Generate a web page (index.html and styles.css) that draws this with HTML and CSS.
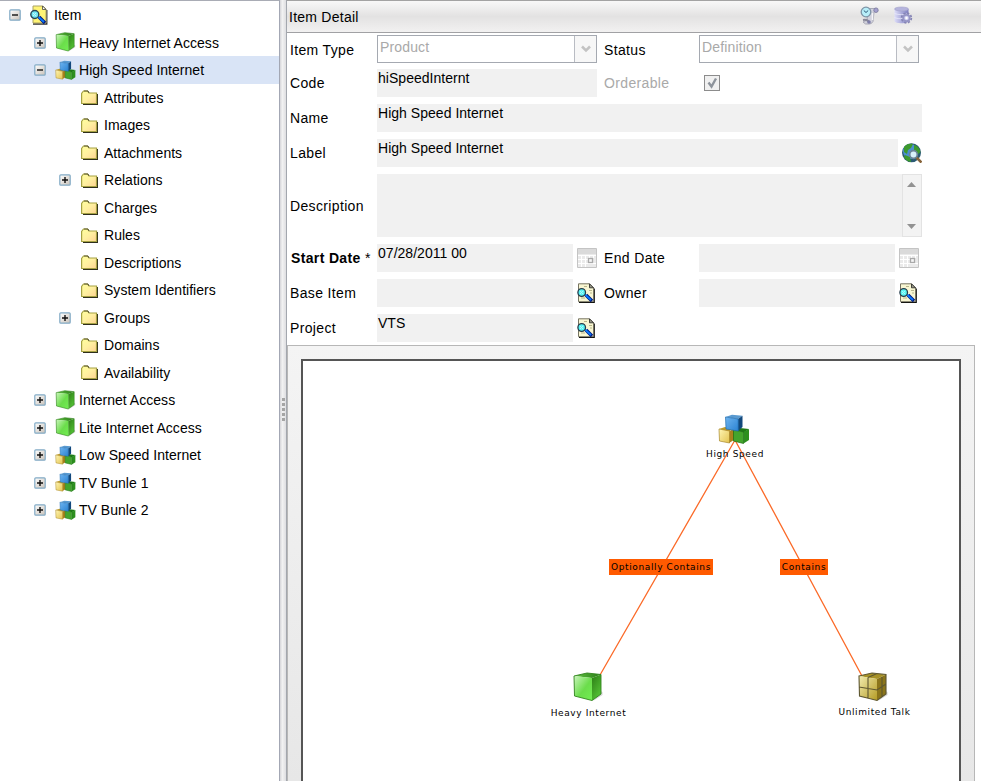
FILE: index.html
```html
<!DOCTYPE html>
<html lang="en">
<head>
<meta charset="utf-8">
<title>Item Detail</title>
<link rel="stylesheet" href="styles.css">
</head>
<body>
<svg class="defs" width="0" height="0" aria-hidden="true">
  <defs>
    <linearGradient id="gFront" x1="0" y1="0" x2="1" y2="1"><stop offset="0" stop-color="#c9f5bb"/><stop offset=".55" stop-color="#6bdd4b"/><stop offset="1" stop-color="#72ee52"/></linearGradient>
    <linearGradient id="gSide" x1="0" y1="0" x2=".6" y2="1"><stop offset="0" stop-color="#2c7d16"/><stop offset="1" stop-color="#55c335"/></linearGradient>
    <linearGradient id="gTop" x1="0" y1="0" x2="1" y2="0"><stop offset="0" stop-color="#62c244"/><stop offset="1" stop-color="#287c15"/></linearGradient>
    <linearGradient id="bFront" x1="0" y1="0" x2="1" y2="1"><stop offset="0" stop-color="#6fb4ef"/><stop offset="1" stop-color="#2b83d3"/></linearGradient>
    <linearGradient id="yFront" x1="0" y1="0" x2="1" y2="1"><stop offset="0" stop-color="#fff6b5"/><stop offset="1" stop-color="#e3c34f"/></linearGradient>
    <linearGradient id="fFill" x1="0" y1="0" x2="1" y2="1"><stop offset="0" stop-color="#ffff9c"/><stop offset=".5" stop-color="#fff0a0"/><stop offset="1" stop-color="#ffd492"/></linearGradient>
    <linearGradient id="oFront" x1="0" y1="0" x2="1" y2="1"><stop offset="0" stop-color="#f2ecb0"/><stop offset="1" stop-color="#b59c24"/></linearGradient>
    <linearGradient id="exFill" x1="0" y1="0" x2="1" y2="1"><stop offset="0" stop-color="#ffffff"/><stop offset="1" stop-color="#c9c1b8"/></linearGradient>
    <linearGradient id="dbFill" x1="0" y1="0" x2="1" y2="0"><stop offset="0" stop-color="#dcdcf8"/><stop offset="1" stop-color="#7e7ec0"/></linearGradient>
    <symbol id="plus" viewBox="0 0 12 12"><rect x=".8" y=".8" width="10.4" height="10.4" rx="1" fill="url(#exFill)" stroke="#82abc6" stroke-width="1.2"/><path d="M3 6h6M6 3v6" stroke="#111" stroke-width="1.4"/></symbol>
    <symbol id="minus" viewBox="0 0 12 12"><rect x=".8" y=".8" width="10.4" height="10.4" rx="1" fill="url(#exFill)" stroke="#82abc6" stroke-width="1.2"/><path d="M3 6h6" stroke="#111" stroke-width="1.4"/></symbol>
    <symbol id="cube" viewBox="0 0 30 30">
      <path d="M20 29 29.5 23v-3l-2-1z" fill="#999" opacity=".4"/>
      <path d="M1 4 14 1l14 1.5L19 6z" fill="url(#gTop)"/><path d="M19 6 28 2.5V22l-9 6.5z" fill="url(#gSide)"/><path d="M1 4 19 6v22.5L1.5 24z" fill="url(#gFront)"/>
      <path d="M1 4 14 1l14 1.5V22l-9 6.5L1.5 24z" fill="none" stroke="#31831d" stroke-width=".9"/>
    </symbol>
    <symbol id="cubes" viewBox="0 0 32 30">
      <path d="M1 15 7 13l8 1-4 4z" fill="#c09b29"/><path d="M11 18 16 14v12l-5 3z" fill="#aa811c"/><path d="M1 15 11.5 17v12L1.500 27z" fill="url(#yFront)" stroke="#a8872a" stroke-width=".7"/>
      <path d="M15 16 22 14l9 1-5 3.500z" fill="#1e7a16"/><path d="M25.500 18 31 15v11l-5.500 3.500z" fill="#2c8f1e"/><path d="M15.500 16 25.500 18v11.500L15.500 27z" fill="#43a52c" stroke="#1d6f14" stroke-width=".7"/>
      <path d="M7.500 3 14 .8l10.500 1L20 5z" fill="#5a9ad0"/><path d="M20 5 24.500 1.800V13L20 17z" fill="#12487c"/><path d="M7.500 3 20.200 5v12L8 15z" fill="url(#bFront)" stroke="#236faf" stroke-width=".7"/>
    </symbol>
    <symbol id="box" viewBox="0 0 30 30">
      <path d="M20 29 29.500 23v-3l-2-1z" fill="#999" opacity=".4"/>
      <path d="M1 4 14 1l14 1.500L19 7z" fill="#a79227"/><path d="M19 7 28 2.500V22l-9 6.500z" fill="#8b751a"/><path d="M1 4 19 7v21.500L1.500 24z" fill="url(#oFront)"/>
      <path d="M1 4 14 1l14 1.500V22l-9 6.500L1.500 24zM10 5.500v21M1 15l18 3 9-6M10 5.500l9-4M24 5v20" fill="none" stroke="#5e5730" stroke-width="1.100"/>
    </symbol>
    <symbol id="folder" viewBox="0 0 17 15">
      <path d="M2 14.300h14.500V4" fill="none" stroke="#2e2e1c" stroke-width="1.200"/>
      <path d="M.6 13.500V3.500L2.500 1h4L8 3h7.500v10.500z" fill="url(#fFill)" stroke="#a5a243" stroke-width="1.200"/><path d="M3 1h4l1 2" fill="none" stroke="#5a5830"/>
    </symbol>
    <symbol id="lookup" viewBox="0 0 18 20">
      <path d="M17 5.500v14H2" fill="none" stroke="#000" stroke-width="1.600"/>
      <path d="M1.500.8h11l4 4V18.700h-15z" fill="#f8f6d2" stroke="#777462" stroke-width="1"/><path d="M12.500.8v4h4z" fill="#9b9b8c" stroke="#222" stroke-width=".8"/>
      <path d="M7 3.500h3M12 7.500h3M13 10h2M4 15h4" stroke="#b8b58c"/>
      <path d="m9 12 6 6" stroke="#001a80" stroke-width="3.600"/><path d="m8 11.500 6 5.500" stroke="#0878ff" stroke-width="1.700"/>
      <circle cx="4.700" cy="9.500" r="3.800" fill="#58f4f4" stroke="#253a4a" stroke-width="1.300"/><path d="m3 8 3 3M3 11l3-3" stroke="#fff" opacity=".5"/>
    </symbol>
    <symbol id="lookupRoot" viewBox="0 0 18 20">
      <path d="M16.800 5v14H3" fill="none" stroke="#333" stroke-width="1.300"/>
      <path d="M3 1h10l3 3V18H3z" fill="#fff475" stroke="#aaa264" stroke-width="1"/><path d="M12.500 1v3.500H16z" fill="#fff" stroke="#444" stroke-width=".8"/>
      <path d="m9 12 6 6" stroke="#001a80" stroke-width="3.600"/><path d="m8 11.500 6 5.500" stroke="#0878ff" stroke-width="1.700"/>
      <circle cx="4.800" cy="9.500" r="4" fill="#72e9f3" stroke="#2a4658" stroke-width="1.400"/><path d="m3 8 3 3M3 11l3-3" stroke="#fff" opacity=".6"/>
    </symbol>
    <symbol id="calendar" viewBox="0 0 20 20">
      <path d="M.5.5h19v19H.5z" fill="#eaeaea" stroke="#c4c4c4"/><path d="M1 1h18v5H1z" fill="#dadada"/>
      <path d="M1 7.500h18M1 11.500h10M1 15.500h18M4.500 7v12M8.500 7v12M12.500 7v3M16.500 7v3" stroke="#fff"/><rect x="11.500" y="10.500" width="4" height="4" fill="#f5f5f5" stroke="#a9a9a9" stroke-width="1.300"/>
    </symbol>
    <symbol id="chev" viewBox="0 0 10 8"><path d="m1 1.500 4 4 4-4" fill="none" stroke="#c3c3c3" stroke-width="2.500"/></symbol>
  </defs>
</svg>
<div class="app">
  <nav class="tree">
    <div class="row l0"><svg class="ex"><use href="#minus"/></svg><span class="slot"><svg class="doc"><use href="#lookupRoot"/></svg></span><span>Item</span></div>
    <div class="row l1"><svg class="ex"><use href="#plus"/></svg><span class="slot"><svg class="cube"><use href="#cube"/></svg></span><span>Heavy Internet Access</span></div>
    <div class="row l1 selected"><svg class="ex"><use href="#minus"/></svg><span class="slot"><svg class="cube"><use href="#cubes"/></svg></span><span>High Speed Internet</span></div>
    <div class="row l2"><span class="ex"></span><span class="slot"><svg class="folder"><use href="#folder"/></svg></span><span>Attributes</span></div>
    <div class="row l2"><span class="ex"></span><span class="slot"><svg class="folder"><use href="#folder"/></svg></span><span>Images</span></div>
    <div class="row l2"><span class="ex"></span><span class="slot"><svg class="folder"><use href="#folder"/></svg></span><span>Attachments</span></div>
    <div class="row l2"><svg class="ex"><use href="#plus"/></svg><span class="slot"><svg class="folder"><use href="#folder"/></svg></span><span>Relations</span></div>
    <div class="row l2"><span class="ex"></span><span class="slot"><svg class="folder"><use href="#folder"/></svg></span><span>Charges</span></div>
    <div class="row l2"><span class="ex"></span><span class="slot"><svg class="folder"><use href="#folder"/></svg></span><span>Rules</span></div>
    <div class="row l2"><span class="ex"></span><span class="slot"><svg class="folder"><use href="#folder"/></svg></span><span>Descriptions</span></div>
    <div class="row l2"><span class="ex"></span><span class="slot"><svg class="folder"><use href="#folder"/></svg></span><span>System Identifiers</span></div>
    <div class="row l2"><svg class="ex"><use href="#plus"/></svg><span class="slot"><svg class="folder"><use href="#folder"/></svg></span><span>Groups</span></div>
    <div class="row l2"><span class="ex"></span><span class="slot"><svg class="folder"><use href="#folder"/></svg></span><span>Domains</span></div>
    <div class="row l2"><span class="ex"></span><span class="slot"><svg class="folder"><use href="#folder"/></svg></span><span>Availability</span></div>
    <div class="row l1"><svg class="ex"><use href="#plus"/></svg><span class="slot"><svg class="cube"><use href="#cube"/></svg></span><span>Internet Access</span></div>
    <div class="row l1"><svg class="ex"><use href="#plus"/></svg><span class="slot"><svg class="cube"><use href="#cube"/></svg></span><span>Lite Internet Access</span></div>
    <div class="row l1"><svg class="ex"><use href="#plus"/></svg><span class="slot"><svg class="cube"><use href="#cubes"/></svg></span><span>Low Speed Internet</span></div>
    <div class="row l1"><svg class="ex"><use href="#plus"/></svg><span class="slot"><svg class="cube"><use href="#cubes"/></svg></span><span>TV Bunle 1</span></div>
    <div class="row l1"><svg class="ex"><use href="#plus"/></svg><span class="slot"><svg class="cube"><use href="#cubes"/></svg></span><span>TV Bunle 2</span></div>
  </nav>
  <div class="splitter"><div class="grip"><i></i><i></i><i></i><i></i><i></i></div></div>
  <main class="detail">
    <header class="bar">
      <span class="title">Item Detail</span>
      <svg class="tool" viewBox="0 0 19 19"><path d="M8 2.500h8l-2 4-1 9c-1 2-3 2.500-4 2.500H5.500L3 16l4-2z" fill="#d2d2dd" stroke="#9a9aaa" stroke-width=".8"/><path d="M12.500 7v7" stroke="#f4f4f8" stroke-width="1.500"/><ellipse cx="16" cy="4.200" rx="2.200" ry="2.300" fill="#a4a0d0" stroke="#77779a" stroke-width=".8"/><path d="M3 14c3-.5 5 0 6 2.500" fill="none" stroke="#888899" stroke-width="2"/><circle cx="9" cy="16" r="1.800" fill="#7d7da9"/><circle cx="6" cy="6" r="4.800" fill="#b7eef9" stroke="#7d94a6" stroke-width="1.300"/><path d="m3.800 4.500 2.200 2 2.200-2" fill="none" stroke="#2a5876"/></svg>
      <svg class="tool" viewBox="0 0 19 19"><path d="M.5 3v12c0 3 14 3 14 0V3z" fill="url(#dbFill)"/><ellipse cx="7.500" cy="3" rx="7" ry="2" fill="#b5b4dd" stroke="#a2a1ca" stroke-width=".6"/><path d="M.5 7.500c3 1.500 11 1.500 14 0M.5 11.500c2 1 5 1.500 8 1" fill="none" stroke="#eeeefc" stroke-width=".7"/><circle cx="12.500" cy="12" r="4.800" fill="none" stroke="#8584b4" stroke-width="1.800" stroke-dasharray="2.200 1.570"/><circle cx="12.500" cy="12" r="3.200" fill="#cfcff0" stroke="#9695c5" stroke-width="1.800"/><circle cx="12.500" cy="12" r="1.200" fill="#fff"/></svg>
    </header>
    <section class="form">
      <label class="a first">Item Type</label><div class="combo f1"><span>Product</span><b><svg><use href="#chev"/></svg></b></div>
      <label class="b first">Status</label><div class="combo f2"><span>Definition</span><b><svg><use href="#chev"/></svg></b></div>

      <label class="a">Code</label><div class="field f1">hiSpeedInternt</div>
      <label class="b dim">Orderable</label><div class="check"><svg viewBox="0 0 14 14"><path d="m3.500 6.500 3 4 4.500-8" fill="none" stroke="#8d939b" stroke-width="2.400"/></svg></div>

      <label class="a">Name</label><div class="field wide">High Speed Internet</div>

      <label class="a">Label</label><div class="field long">High Speed Internet</div>
      <svg class="globe" viewBox="0 0 20 20"><circle cx="9.500" cy="9.800" r="9.500" fill="#2a5a72"/><circle cx="8.500" cy="8.500" r="7.500" fill="#4b8fd0"/><path d="M2 4c2-3 6-4 9-3L9 5 6 7l-1 4-3-2zM12 2c4 1 6 4 6.500 7L15 12l-3-4zM3 12l5 2 1 5c-3 0-6-3-7-5z" fill="#3d9a2d"/><path d="m14.500 14.500 5 5" stroke="#87643a" stroke-width="2.600"/><circle cx="11.500" cy="11.500" r="3.800" fill="#d8f0fa" stroke="#6b8496" stroke-width="1.700"/></svg>

      <label class="a">Description</label><div class="field area"><div class="scroll"><svg viewBox="0 0 9 5"><path d="M4.500 0 9 5H0z" fill="#929292"/></svg><svg viewBox="0 0 9 5"><path d="M0 0h9L4.500 5z" fill="#929292"/></svg></div></div>

      <label class="a req"><strong>Start Date</strong> *</label><div class="field f1 s">07/28/2011 00</div><svg class="cal i1"><use href="#calendar"/></svg>
      <label class="b">End Date</label><div class="field f2 s"></div><svg class="cal i2"><use href="#calendar"/></svg>

      <label class="a">Base Item</label><div class="field f1 s"></div><svg class="doc i1"><use href="#lookup"/></svg>
      <label class="b">Owner</label><div class="field f2 s"></div><svg class="doc i2"><use href="#lookup"/></svg>

      <label class="a">Project</label><div class="field f1 s">VTS</div><svg class="doc i1"><use href="#lookup"/></svg>
    </section>
    <section class="panel">
      <div class="canvas">
        <svg class="edges" viewBox="303 361 656 420"><path d="M600 675 735 440 862 676" fill="none" stroke="#fb6a28" stroke-width="1.300"/></svg>
        <svg class="node n1"><use href="#cubes"/></svg><span class="name t1">High Speed</span>
        <svg class="node n2"><use href="#cube"/></svg><span class="name t2">Heavy Internet</span>
        <svg class="node n3"><use href="#box"/></svg><span class="name t3">Unlimited Talk</span>
        <span class="tag g1">Optionally Contains</span>
        <span class="tag g2">Contains</span>
      </div>
    </section>
  </main>
</div>
</body>
</html>
```
FILE: styles.css
```css
* { box-sizing: border-box; }
body { margin: 0; background: #fff; color: #000; font: 14px/16px "Liberation Sans", Arial, sans-serif; letter-spacing: .03px; }
svg { display: block; flex: none; }
.defs { position: absolute; }
.app { display: flex; width: 981px; height: 781px; overflow: hidden; }

.tree { width: 280px; flex: none; border-top: 1px solid #a9acb5; border-right: 1px solid #a3a7b4; }
.row { display: flex; align-items: center; height: 27.5px; white-space: nowrap; }
.row > span:last-child { padding-top: 1px; }
.l0 { padding-left: 9px; }
.l1 { padding-left: 34px; }
.l2 { padding-left: 59px; }
.selected { background: #d9e4f6; }
.ex { width: 12px; height: 12px; margin-right: 9px; flex: none; position: relative; top: .5px; }
.slot { width: 24px; flex: none; }
.doc { width: 18px; height: 20px; }
.cube { width: 21px; height: 20px; }
.folder { width: 17px; height: 15px; margin-left: 1px; position: relative; top: .5px; }

.splitter { width: 6px; flex: none; background: linear-gradient(90deg, #d5d5d9, #f2f2f2 40%, #dedee1); display: flex; align-items: center; justify-content: flex-end; }
.grip { display: grid; gap: 2px; margin: 38px 1px 0 0; }
.grip i { width: 3px; height: 3px; background: #a5a5a5; }

.detail { flex: 1; min-width: 0; border-left: 1px solid #a3a7ae; display: flex; flex-direction: column; }
.bar { height: 33px; flex: none; display: flex; align-items: center; border-top: 1px solid #a3a3a3; border-bottom: 1px solid #a1a1a4; background: linear-gradient(#f8f8f8, #e3e2e2 50%, #f2f1f1); }
.title { width: 573px; padding-left: 2px; letter-spacing: .25px; }
.tool { width: 19px; height: 19px; margin: -3px 15px 0 0; }

.form { display: grid; grid-template-columns: 90px 196px 31px 95px 196px 28px; grid-template-rows: 28px 28px 28px 28px 63px 28px 28px 28px; row-gap: 7px; padding-top: 1px; height: 312px; flex: none; align-items: center; white-space: nowrap; }
.form label { padding-left: 3px; letter-spacing: .35px; }
.form .a { grid-column: 1; }
.form .b { grid-column: 4; padding-left: 0; }
.form .req { padding-left: 4px; }
.form .first { padding-top: 3px; }
.dim { color: #a9a9a9; }
.field { height: 28px; padding: 1px; background: #f1f1f1; align-self: start; }
.f1 { grid-column: 2 / 4; width: 220px; }
.f2 { grid-column: 5 / 7; width: 220px; }
.f1.s { grid-column: 2; width: 196px; }
.f2.s { grid-column: 5; width: 196px; }
.wide { grid-column: 2 / 7; width: 545px; }
.long { grid-column: 2 / 6; width: 521px; }
.area { grid-column: 2 / 7; width: 545px; height: 63px; padding: 0; display: flex; justify-content: flex-end; }
.combo { height: 28px; margin-top: 2px; display: flex; border: 1px solid #a5a9b1; color: #a9a9a9; background: #fff; letter-spacing: .15px; }
.combo span { flex: 1; padding: 3px 2px; }
.combo b { width: 22px; border-left: 1px solid #b9bcc3; background: #f7f7f7; display: grid; place-items: center; }
.combo b svg { width: 10px; height: 8px; }
.check { grid-column: 5; width: 16px; height: 16px; margin-left: 5px; border: 1px solid #8c8c8c; background: #f0f0f0; }
.check svg { width: 14px; height: 14px; }
.globe { grid-column: 6; width: 20px; height: 20px; margin-left: 7px; }
.scroll { width: 20px; border: 1px solid #e3e3e3; background: #f3f3f3; display: flex; flex-direction: column; align-items: center; justify-content: space-between; padding: 7px 1px 7px 0; }
.scroll svg { width: 9px; height: 5px; }
.i1 { grid-column: 3; margin-left: 4px; }
.i2 { grid-column: 6; margin-left: 4px; }
.doc.i1, .doc.i2 { margin-left: 3.5px; }
.cal { width: 20px; height: 20px; }

.panel { flex: 1; width: 688px; border: 1px solid #b7b7b7; border-bottom: 0; padding: 13px 13px 0; background: linear-gradient(#f4f4f4, #e7e7e7); }
.canvas { position: relative; height: 100%; border: 2px solid #555; border-bottom: 0; background: #fff; font: 9px/12px "DejaVu Sans", Verdana, sans-serif; letter-spacing: .62px; }
.edges { position: absolute; left: 0; top: 0; width: 656px; height: 420px; }
.node, .name, .tag { position: absolute; white-space: nowrap; }
.node { width: 30px; height: 30px; }
.n1 { left: 415px; top: 53px; width: 32px; }
.n2 { left: 270px; top: 311px; }
.n3 { left: 555px; top: 311px; }
.name { transform: translateX(-50%); }
.t1 { left: 432px; top: 87px; }
.t2 { left: 285.5px; top: 346px; }
.t3 { left: 571.5px; top: 345px; }
.tag { height: 16px; background: #ff5a00; line-height: 17px; text-align: center; }
.g1 { left: 306px; top: 198px; width: 104px; }
.g2 { left: 477px; top: 198px; width: 48px; }
```
